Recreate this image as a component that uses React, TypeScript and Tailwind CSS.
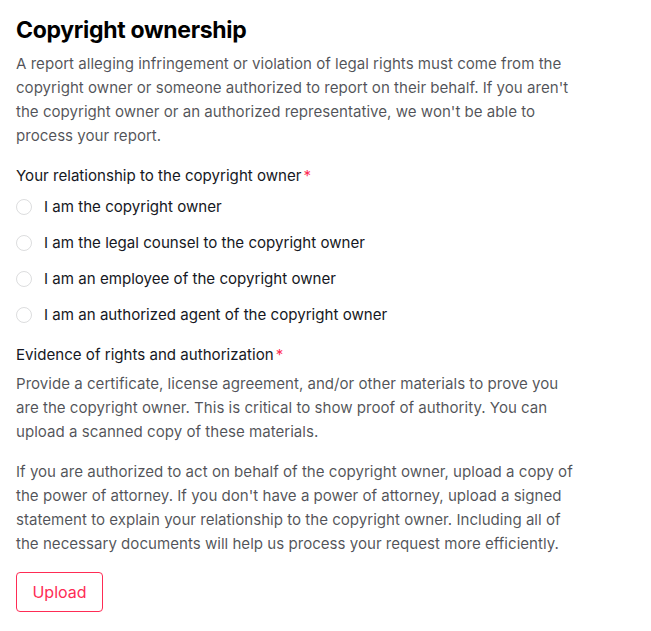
import React from "react";

const options = [
  "I am the copyright owner",
  "I am the legal counsel to the copyright owner",
  "I am an employee of the copyright owner",
  "I am an authorized agent of the copyright owner",
];

function Lines({ lines }: { lines: string[] }) {
  return (
    <>
      {lines.map((l, i) => (
        <span key={i} className="block">
          {l}
        </span>
      ))}
    </>
  );
}

export default function App() {
  return (
    <div className="bg-white min-h-screen px-4 pt-[15px] font-['Inter',sans-serif] text-[#161823]">
      <div className="w-[580px]">
        <h1 className="text-[23px] leading-[30px] font-bold tracking-[-0.3px] text-black">Copyright ownership</h1>
        <p className="mt-[7px] text-[15.1px] leading-[24px] text-[#161823bf]">
          <Lines
            lines={[
              "A report alleging infringement or violation of legal rights must come from the",
              "copyright owner or someone authorized to report on their behalf. If you aren't",
              "the copyright owner or an authorized representative, we won't be able to",
              "process your report.",
            ]}
          />
        </p>

        <div className="mt-[16px] text-[15.1px] leading-[24px]">
          Your relationship to the copyright owner<span className="text-[#fe2c55] ml-[2px]">*</span>
        </div>
        <div className="flex flex-col gap-[12px] mt-[7px]">
          {options.map((o) => (
            <label key={o} className="flex items-center gap-[12px] h-[24px] text-[15.1px]">
              <span className="w-[16px] h-[16px] rounded-full border border-[#16182326] shrink-0" />
              <span>{o}</span>
            </label>
          ))}
        </div>

        <div className="mt-[16px] text-[15.1px] leading-[24px]">
          Evidence of rights and authorization<span className="text-[#fe2c55] ml-[2px]">*</span>
        </div>
        <p className="mt-[5px] text-[15.1px] leading-[24px] text-[#161823bf]">
          <Lines
            lines={[
              "Provide a certificate, license agreement, and/or other materials to prove you",
              "are the copyright owner. This is critical to show proof of authority. You can",
              "upload a scanned copy of these materials.",
            ]}
          />
        </p>
        <p className="mt-[16px] text-[15.1px] leading-[24px] text-[#161823bf]">
          <Lines
            lines={[
              "If you are authorized to act on behalf of the copyright owner, upload a copy of",
              "the power of attorney. If you don't have a power of attorney, upload a signed",
              "statement to explain your relationship to the copyright owner. Including all of",
              "the necessary documents will help us process your request more efficiently.",
            ]}
          />
        </p>

        <button className="mt-[16px] h-[40px] w-[87px] rounded-[4px] border border-[#fe2c55] text-[#fe2c55] text-[16px]">
          Upload
        </button>
      </div>
    </div>
  );
}
